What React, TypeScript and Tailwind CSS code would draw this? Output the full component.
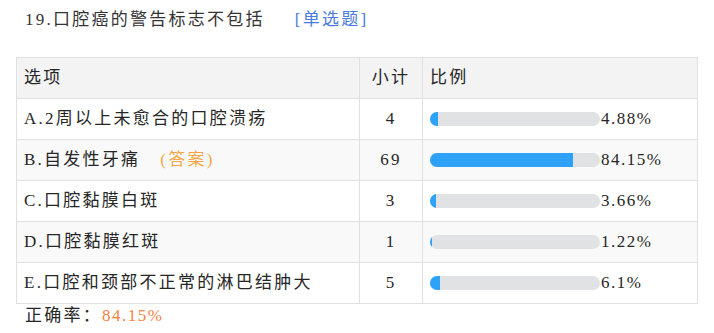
import React from "react";

const rows = [
  { label: "A.2周以上未愈合的口腔溃疡", count: 4, pct: 4.88, answer: false },
  { label: "B.自发性牙痛", count: 69, pct: 84.15, answer: true },
  { label: "C.口腔黏膜白斑", count: 3, pct: 3.66, answer: false },
  { label: "D.口腔黏膜红斑", count: 1, pct: 1.22, answer: false },
  { label: "E.口腔和颈部不正常的淋巴结肿大", count: 5, pct: 6.1, answer: false },
];

export default function App() {
  return (
    <div
      className="w-[714px] h-[333px] bg-white text-[#262626] text-[17px] tracking-[2.25px] overflow-hidden"
      style={{ fontFamily: '"Liberation Serif", "Noto Sans CJK SC", serif' }}
    >
      <div className="pt-[8px] pl-[25px] leading-[24px] flex text-[#333]">
        <span>19.口腔癌的警告标志不包括</span>
        <span className="ml-[30px] text-[#4a7bdc]">[单选题]</span>
      </div>
      <div className="pl-[16px] pt-[25px]">
        <table className="border-collapse w-[681px] table-fixed">
          <colgroup>
            <col className="w-[343px]" />
            <col className="w-[63px]" />
            <col className="w-[275px]" />
          </colgroup>
          <thead>
            <tr className="h-[41px] bg-[#f3f3f3]">
              <th className="border border-[#e0e0e0] text-left font-normal pl-[7px]">选项</th>
              <th className="border border-[#e0e0e0] text-center font-normal">小计</th>
              <th className="border border-[#e0e0e0] text-left font-normal pl-[7px]">比例</th>
            </tr>
          </thead>
          <tbody>
            {rows.map((r, i) => (
              <tr key={i} className={`h-[41px] ${i % 2 === 1 ? "bg-[#f9f9f9]" : "bg-white"}`}>
                <td className="border border-[#e0e0e0] pl-[7px] whitespace-nowrap">
                  {r.label}
                  {r.answer && <span className="ml-[20px] text-[#f5a748]">(答案)</span>}
                </td>
                <td className="border border-[#e0e0e0] text-center">{r.count}</td>
                <td className="border border-[#e0e0e0] pl-[7px]">
                  <div className="flex items-center">
                    <div className="w-[170px] h-[14px] rounded-full bg-[#e1e2e4] overflow-hidden">
                      <div className="h-full bg-[#2ea1f8]" style={{ width: `${(r.pct / 100) * 170}px` }} />
                    </div>
                    <span className="ml-[1px] tracking-[1.5px]">{r.pct}%</span>
                  </div>
                </td>
              </tr>
            ))}
          </tbody>
        </table>
      </div>
      <div className="pl-[25px] leading-[22px] pt-[1px]">
        正确率：<span className="text-[#f7813f] tracking-[1.5px]">84.15%</span>
      </div>
    </div>
  );
}
